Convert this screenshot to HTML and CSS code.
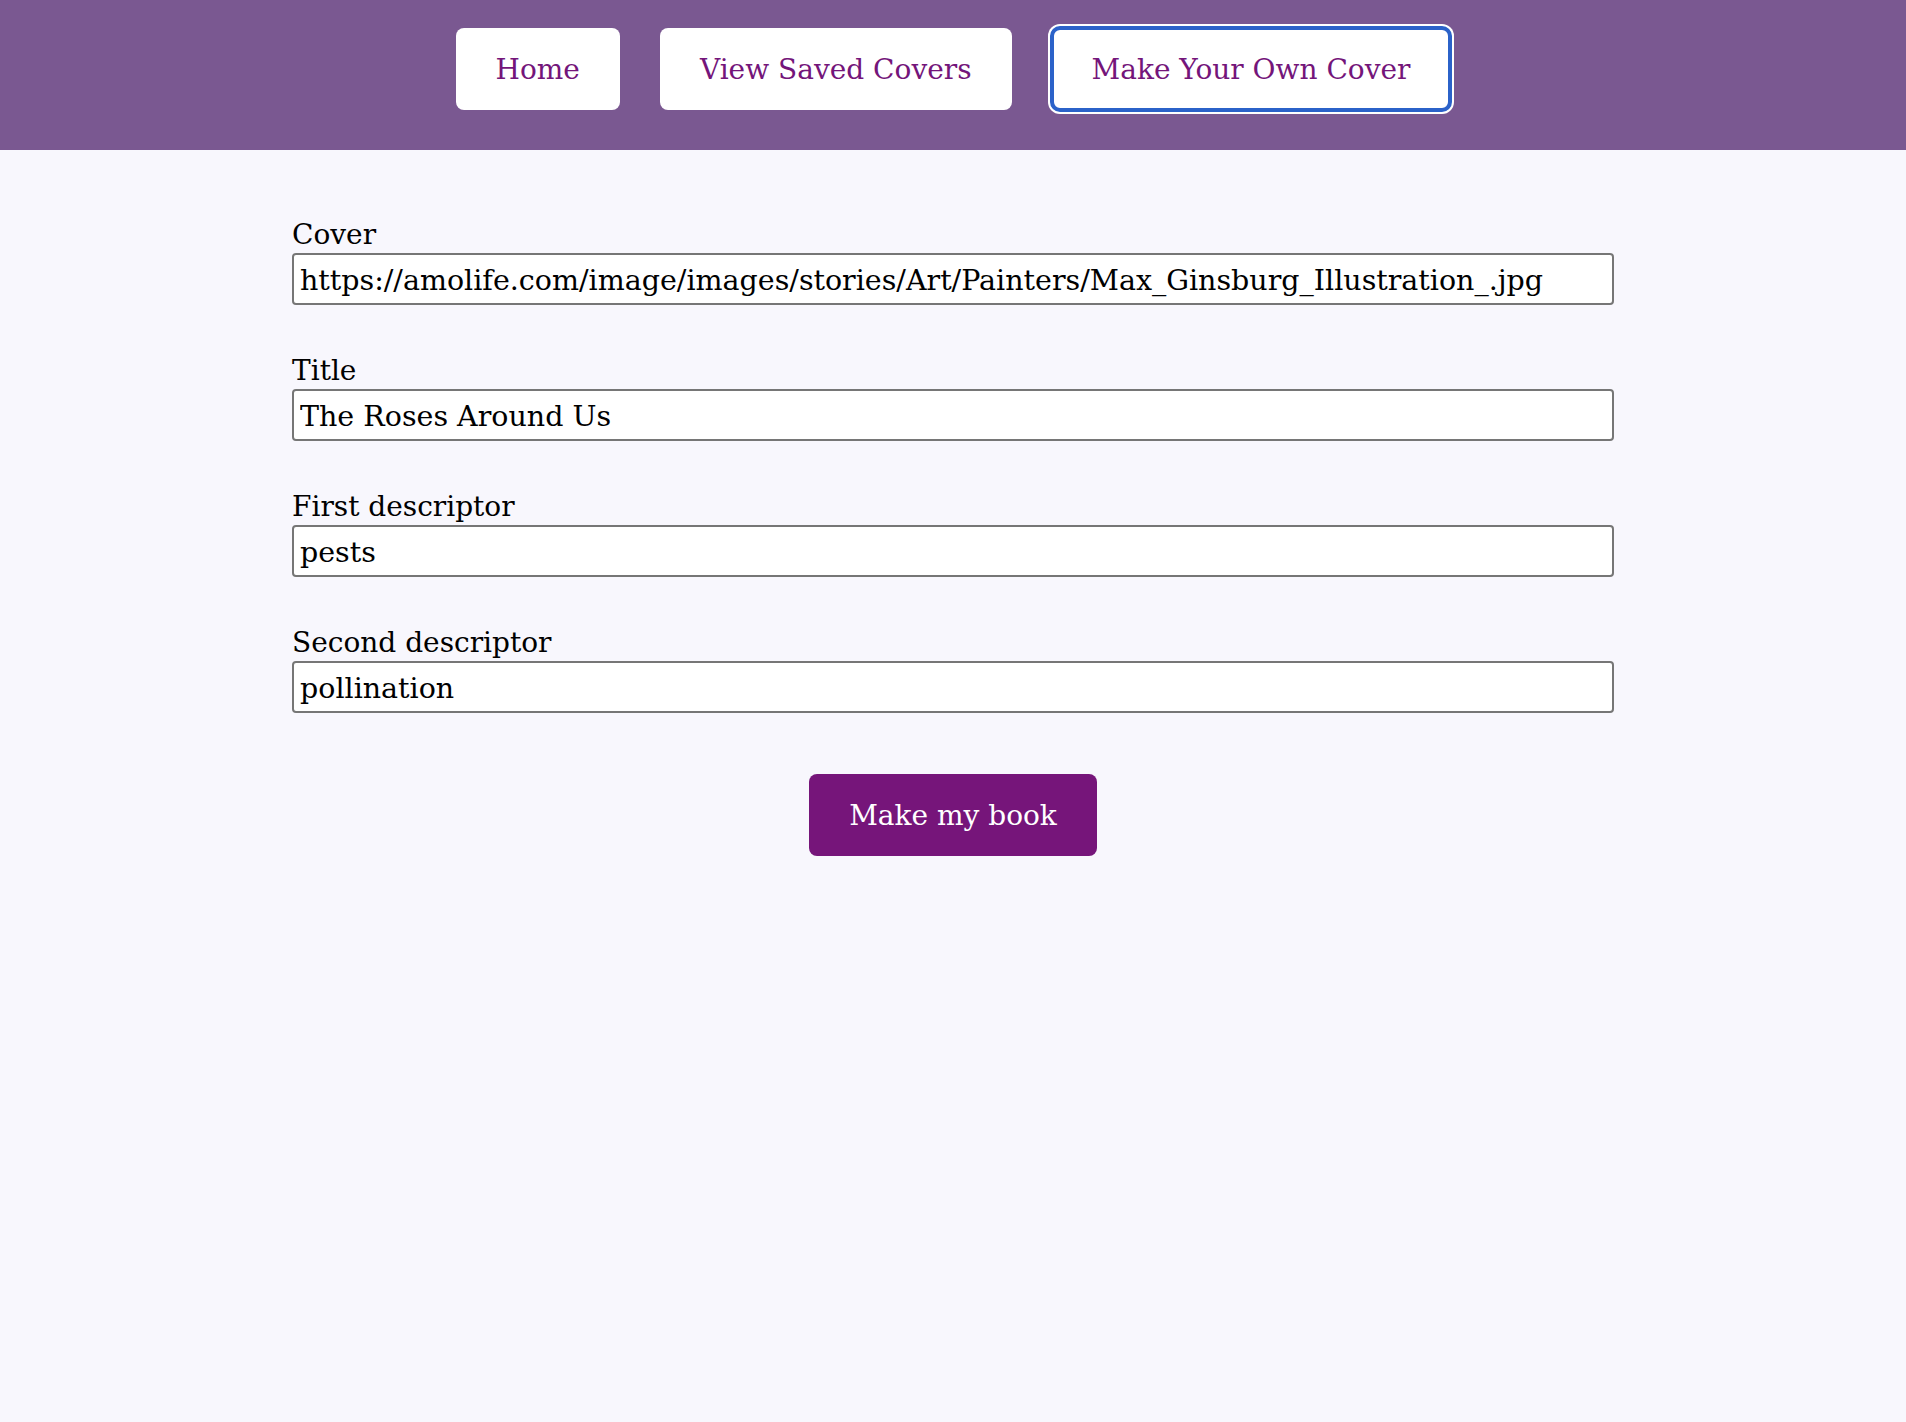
FILE: index.html
```html
<!DOCTYPE html>
<html lang="en">
<head>
<meta charset="utf-8">
<title>Make Your Own Cover</title>
<link rel="stylesheet" href="styles.css">
</head>
<body>
<header class="top-bar">
  <nav class="nav">
    <button class="nav-btn" type="button">Home</button>
    <button class="nav-btn" type="button">View Saved Covers</button>
    <button class="nav-btn is-focused" type="button">Make Your Own Cover</button>
  </nav>
</header>
<main class="main">
  <form class="cover-form">
    <div class="field">
      <label class="field-label" for="cover">Cover</label>
      <input class="field-input" id="cover" type="text" value="https://amolife.com/image/images/stories/Art/Painters/Max_Ginsburg_Illustration_.jpg">
    </div>
    <div class="field">
      <label class="field-label" for="title">Title</label>
      <input class="field-input" id="title" type="text" value="The Roses Around Us">
    </div>
    <div class="field">
      <label class="field-label" for="desc1">First descriptor</label>
      <input class="field-input" id="desc1" type="text" value="pests">
    </div>
    <div class="field">
      <label class="field-label" for="desc2">Second descriptor</label>
      <input class="field-input" id="desc2" type="text" value="pollination">
    </div>
    <div class="actions">
      <button class="make-btn" type="button">Make my book</button>
    </div>
  </form>
</main>
</body>
</html>
```

FILE: styles.css
```css
* { box-sizing: border-box; }

html, body {
  margin: 0;
  padding: 0;
  background: #f8f7fd;
  font-family: "DejaVu Serif", "Liberation Serif", serif;
  color: #000;
}

.top-bar {
  background: #7a5891;
  height: 150px;
  padding-top: 28px;
}

.nav {
  display: flex;
  justify-content: center;
  gap: 40px;
}

.nav-btn {
  height: 82px;
  background: #fff;
  border: 0;
  border-radius: 8px;
  color: #74157a;
  font-family: "DejaVu Serif", "Liberation Serif", serif;
  font-size: 28px;
  padding: 0 40px;
  cursor: pointer;
}

.is-focused {
  outline: 4px solid #2b62c9;
  outline-offset: -2px;
  box-shadow: 0 0 0 4px #fff;
}

.main {
  padding-top: 67px;
}

.cover-form {
  width: 1322px;
  margin: 0 auto;
  display: flex;
  flex-direction: column;
  gap: 48px;
}

.field {
  display: flex;
  flex-direction: column;
}

.field-label {
  font-size: 28px;
  line-height: 36px;
}

.field-input {
  height: 52px;
  width: 100%;
  border: 2px solid #767676;
  border-radius: 4px;
  background: #fff;
  padding: 3px 2px 0 6px;
  font-family: "DejaVu Serif", "Liberation Serif", serif;
  font-size: 28.5px;
  color: #000;
}

.actions {
  display: flex;
  justify-content: center;
  margin-top: 13px;
}

.make-btn {
  width: 288px;
  height: 82px;
  background: #76157a;
  color: #fff;
  border: 0;
  border-radius: 8px;
  font-family: "DejaVu Serif", "Liberation Serif", serif;
  font-size: 28px;
  padding: 0;
  cursor: pointer;
}
```
